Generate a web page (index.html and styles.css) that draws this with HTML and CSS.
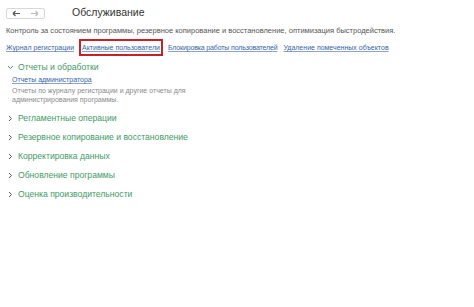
FILE: index.html
```html
<!DOCTYPE html>
<html lang="ru">
<head>
<meta charset="utf-8">
<link rel="stylesheet" href="styles.css">
</head>
<body>
<div class="page">
  <div class="header">
    <div class="nav">
      <span class="navbtn"><svg width="9" height="7" viewBox="0 0 9 7"><path d="M1 3.5H8M1 3.5L3.5 1M1 3.5L3.5 6" stroke="#555" stroke-width="1.2" fill="none"/></svg></span>
      <span class="navbtn"><svg width="9" height="7" viewBox="0 0 9 7"><path d="M1 3.5H8M8 3.5L5.5 1M8 3.5L5.5 6" stroke="#bbb" stroke-width="1.2" fill="none"/></svg></span>
    </div>
    <h1 class="title">Обслуживание</h1>
  </div>
  <p class="desc">Контроль за состоянием программы, резервное копирование и восстановление, оптимизация быстродействия.</p>
  <div class="links">
    <a class="link">Журнал регистрации</a>
    <a class="link boxed">Активные пользователи</a>
    <a class="link tight">Блокировка работы пользователей</a>
    <a class="link">Удаление помеченных объектов</a>
  </div>
  <div class="group open">
    <div class="ghead"><svg class="chev" width="7" height="7" viewBox="0 0 7 7"><path d="M1 2L3.5 4.5L6 2" stroke="#4a9a6a" stroke-width="1" fill="none"/></svg>Отчеты и обработки</div>
    <div class="gbody">
      <a class="link">Отчеты администратора</a>
      <p class="note">Отчеты по журналу регистрации и другие отчеты для<br>администрирования программы.</p>
    </div>
  </div>
  <div class="group"><div class="ghead"><svg class="chev" width="7" height="7" viewBox="0 0 7 7"><path d="M2 1L4.5 3.5L2 6" stroke="#555" stroke-width="1" fill="none"/></svg>Регламентные операции</div></div>
  <div class="group"><div class="ghead"><svg class="chev" width="7" height="7" viewBox="0 0 7 7"><path d="M2 1L4.5 3.5L2 6" stroke="#555" stroke-width="1" fill="none"/></svg>Резервное копирование и восстановление</div></div>
  <div class="group"><div class="ghead"><svg class="chev" width="7" height="7" viewBox="0 0 7 7"><path d="M2 1L4.5 3.5L2 6" stroke="#555" stroke-width="1" fill="none"/></svg>Корректировка данных</div></div>
  <div class="group"><div class="ghead"><svg class="chev" width="7" height="7" viewBox="0 0 7 7"><path d="M2 1L4.5 3.5L2 6" stroke="#555" stroke-width="1" fill="none"/></svg>Обновление программы</div></div>
  <div class="group"><div class="ghead"><svg class="chev" width="7" height="7" viewBox="0 0 7 7"><path d="M2 1L4.5 3.5L2 6" stroke="#555" stroke-width="1" fill="none"/></svg>Оценка производительности</div></div>
</div>
</body>
</html>
```

FILE: styles.css
```css
html, body { margin: 0; padding: 0; background: #fff; }
body { font-family: "Liberation Sans", Arial, sans-serif; color: #444; }
.page { padding: 5px 6px 0 6px; }
.header { display: flex; align-items: center; height: 14px; }
.nav { display: flex; border: 1px solid #d8d8d8; border-radius: 2px; width: 39px; box-sizing: border-box; height: 11px; margin-top: 2px; }
.navbtn { flex: 1; display: flex; align-items: center; justify-content: center; }
.title { margin: 0 0 0 27px; font-size: 10.5px; font-weight: normal; color: #333; line-height: 14px; }
.desc { margin: 7px 0 0 0; font-size: 7.5px; color: #555; line-height: 10px; }
.links { display: flex; align-items: center; margin-top: 3px; height: 17px; }
.link { font-size: 7px; color: #3a5fa5; text-decoration: underline; text-decoration-color: #8aa4cc; white-space: nowrap; }
.links .link { margin-right: 6px; }
.links .boxed { margin-left: -1px; margin-right: 5px; border: 2px solid #c8202a; padding: 3px 1px; }
.links .tight { letter-spacing: -0.15px; }
.group { margin-top: 5px; }
.group.open { margin-top: 4px; padding-bottom: 2px; }
.ghead { display: flex; align-items: center; font-size: 8.6px; color: #3f9a66; height: 14px; line-height: 14px; }
.chev { margin: 0 4px 0 1px; flex: none; }
.gbody { padding-left: 6px; }
.gbody .link { display: block; line-height: 11px; }
.note { margin: 1px 0 0 0; font-size: 7px; color: #8a8a8a; line-height: 9px; }
```
